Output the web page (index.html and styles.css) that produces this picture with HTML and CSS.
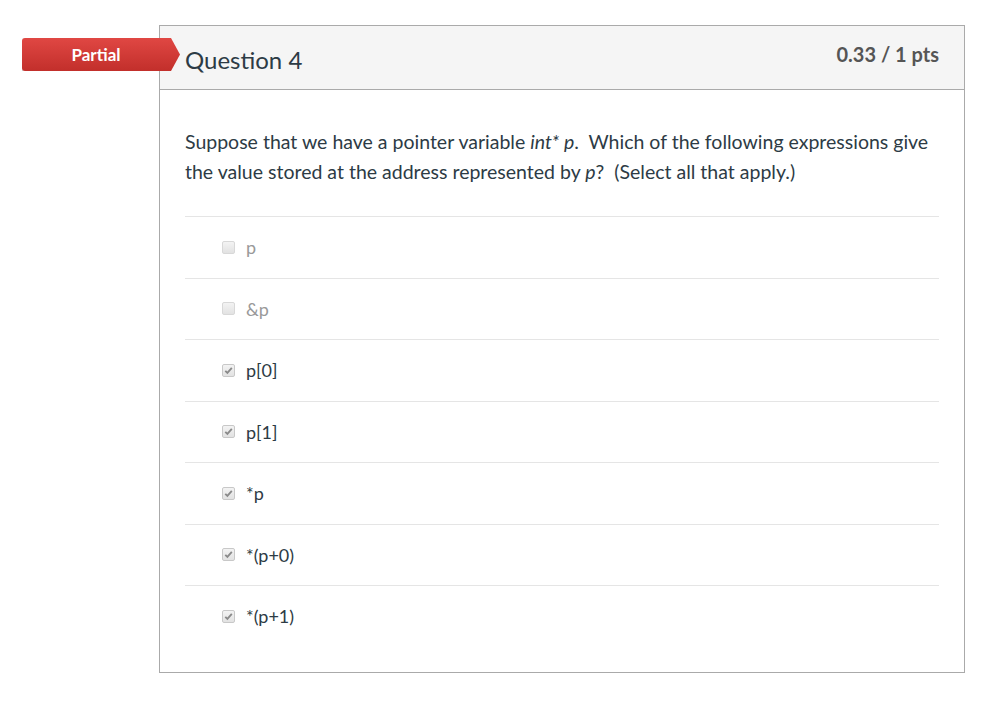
FILE: index.html
```html
<!DOCTYPE html>
<html lang="en">
<head>
    <meta charset="UTF-8">
    <title>Question 4</title>
    <link rel="stylesheet" href="styles.css">
</head>
<body>

<div class="page">
    <div class="question">
        <!-- Result badge -->
        <div class="badge">Partial</div>

        <div class="question-header">
            <span class="question-name">Question 4</span>
            <span class="question-points">0.33 / 1 pts</span>
        </div>

        <div class="question-body">
            <p class="question-text">Suppose that we have a pointer variable <em>int* p</em>.&nbsp; Which of the following expressions give the value stored at the address represented by <em>p</em>?&nbsp; (Select all that apply.)</p>

            <div class="answers">
                <div class="answer muted">
                    <span class="check"></span>
                    <span class="answer-text">p</span>
                </div>
                <div class="answer muted">
                    <span class="check"></span>
                    <span class="answer-text">&amp;p</span>
                </div>
                <div class="answer">
                    <span class="check checked"><svg viewBox="0 0 12 12"><path d="M2.5 6.3 L4.8 8.6 L9.6 3.2" /></svg></span>
                    <span class="answer-text">p[0]</span>
                </div>
                <div class="answer">
                    <span class="check checked"><svg viewBox="0 0 12 12"><path d="M2.5 6.3 L4.8 8.6 L9.6 3.2" /></svg></span>
                    <span class="answer-text">p[1]</span>
                </div>
                <div class="answer">
                    <span class="check checked"><svg viewBox="0 0 12 12"><path d="M2.5 6.3 L4.8 8.6 L9.6 3.2" /></svg></span>
                    <span class="answer-text">*p</span>
                </div>
                <div class="answer">
                    <span class="check checked"><svg viewBox="0 0 12 12"><path d="M2.5 6.3 L4.8 8.6 L9.6 3.2" /></svg></span>
                    <span class="answer-text">*(p+0)</span>
                </div>
                <div class="answer">
                    <span class="check checked"><svg viewBox="0 0 12 12"><path d="M2.5 6.3 L4.8 8.6 L9.6 3.2" /></svg></span>
                    <span class="answer-text">*(p+1)</span>
                </div>
            </div>
        </div>
    </div>
</div>

</body>
</html>
```

FILE: styles.css
```css
* {
    margin: 0;
    padding: 0;
    box-sizing: border-box;
}

body {
    font-family: Lato, "Noto Sans", sans-serif;
    background-color: #fff;
    color: #333;
}

.page {
    padding: 25px 0 0 159px;
    width: 965px;
}

.question {
    position: relative;
    border: 1px solid #aaa;
}

.badge {
    position: absolute;
    left: -138px;
    top: 12px;
    width: 158px;
    height: 33px;
    padding-right: 10px;
    background: linear-gradient(#e04743, #c22f2b);
    color: #fff;
    font-weight: 700;
    font-size: 17px;
    line-height: 33px;
    text-align: center;
    border-radius: 3px 0 0 3px;
    box-shadow: 0 1px 2px rgba(0, 0, 0, 0.4);
    clip-path: polygon(0 0, 149px 0, 158px 50%, 149px 100%, 0 100%);
}

.question-header {
    display: flex;
    justify-content: space-between;
    align-items: flex-start;
    height: 64px;
    padding: 0 25px;
    background-color: #f5f5f5;
    border-bottom: 1px solid #aaa;
}

.question-name {
    font-size: 24px;
    color: #2d3b45;
    padding-top: 19px;
}

.question-points {
    font-size: 20px;
    font-weight: 700;
    color: #555;
    padding-top: 16px;
}

.question-body {
    padding: 37px 25px 25px;
}

.question-text {
    font-size: 19.5px;
    line-height: 30px;
    color: #2d3b45;
    margin-bottom: 29px;
}

.answer {
    display: flex;
    align-items: center;
    height: 61.5px;
    padding-left: 37px;
    border-top: 1px solid #e5e5e5;
    font-size: 18px;
    color: #2d3b45;
}

.answer.muted {
    color: #999;
}

.check {
    width: 13px;
    height: 13px;
    margin-right: 11px;
    border: 1px solid #d8d8d8;
    border-radius: 2px;
    background: linear-gradient(#f3f3f3, #e2e2e2);
    display: flex;
}

.check.checked {
    border-color: #c8c8c8;
}

.check svg {
    width: 11px;
    height: 11px;
}

.check svg path {
    fill: none;
    stroke: #8a8a8a;
    stroke-width: 2;
}
```
